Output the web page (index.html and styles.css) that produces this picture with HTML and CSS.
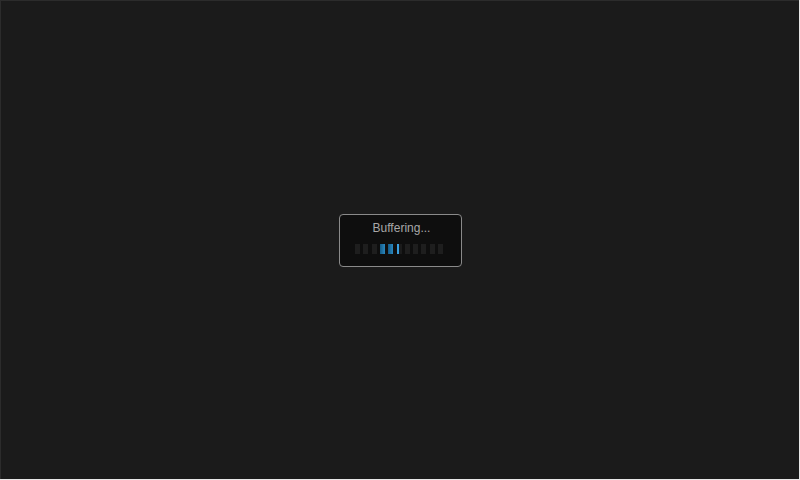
FILE: index.html
```html
<!DOCTYPE html>
<html>
<head>
<meta charset="utf-8">
<link rel="stylesheet" href="styles.css">
</head>
<body>
<div class="screen">
  <div class="dialog">
    <div class="label">Buffering...</div>
    <div class="bars">
      <span class="bar"></span>
      <span class="bar"></span>
      <span class="bar"></span>
      <span class="bar on"></span>
      <span class="bar on"></span>
      <span class="bar thin"></span>
      <span class="bar"></span>
      <span class="bar"></span>
      <span class="bar"></span>
      <span class="bar"></span>
      <span class="bar"></span>
    </div>
  </div>
</div>
</body>
</html>
```
FILE: styles.css
```css
html, body {
  margin: 0;
  padding: 0;
  width: 800px;
  height: 480px;
  background: #e8e8e8;
  overflow: hidden;
}
.screen {
  width: 798px;
  height: 478px;
  background: #1b1b1b;
  border-left: 1px solid #2c2c2c;
  border-top: 1px solid #2c2c2c;
  display: flex;
  align-items: center;
  justify-content: center;
  font-family: "Liberation Sans", Arial, sans-serif;
}
.dialog {
  box-sizing: border-box;
  width: 123px;
  height: 53px;
  margin-top: 1px;
  background: #0e0e0e;
  border: 1px solid #8a8a8a;
  border-radius: 4px;
  display: flex;
  flex-direction: column;
  align-items: center;
  padding-top: 5px;
}
.label {
  color: #a8a8a8;
  font-size: 12px;
  line-height: 16px;
  padding-left: 3px;
}
.bars {
  display: flex;
  gap: 3.33px;
  margin-top: 8px;
  margin-right: 2px;
  height: 10px;
}
.bar {
  display: block;
  width: 5px;
  height: 10px;
  background: #1e1e1e;
}
.bar.on {
  background: linear-gradient(to right, #145a85, #2a88c0);
}
.bar.thin {
  background: linear-gradient(to right, #3aa0e0 0, #3aa0e0 2px, #1b1b1b 2px);
}
```
